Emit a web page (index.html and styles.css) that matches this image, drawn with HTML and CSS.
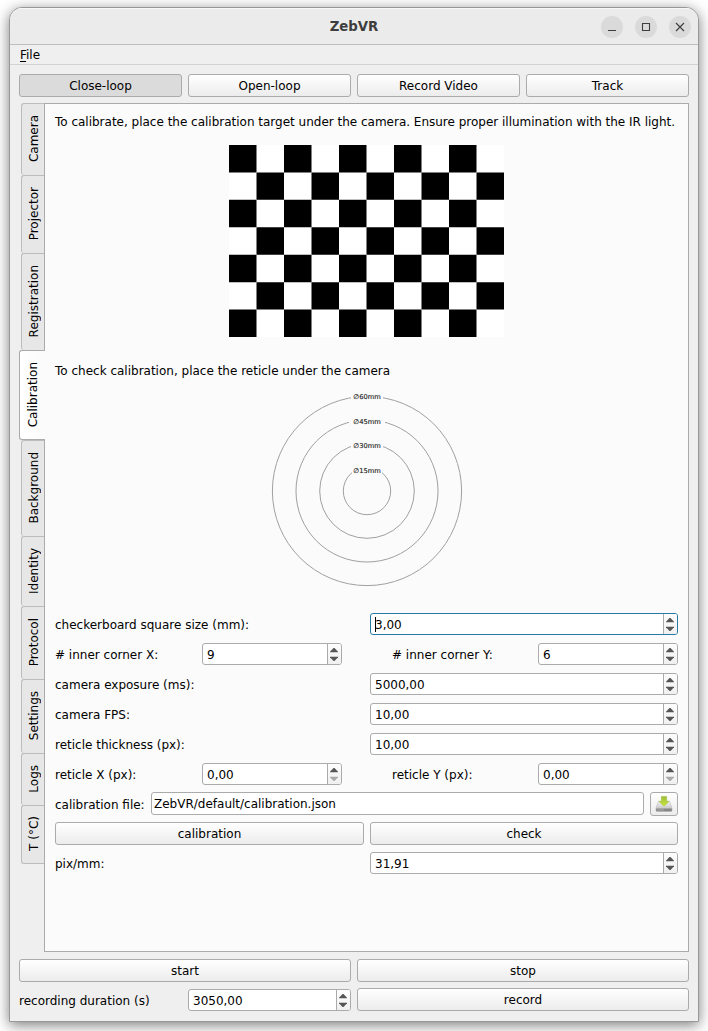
FILE: index.html
```html
<!DOCTYPE html>
<html lang="en">
<head>
<meta charset="utf-8">
<title>ZebVR</title>
<link rel="stylesheet" href="styles.css">
</head>
<body>
<svg width="0" height="0" class="defs">
  <symbol id="arrows" viewBox="0 0 13 20">
    <path class="up" d="M2 8.3V7.7L5.5 4H6.5L10 7.7V8.3Z"/>
    <path class="down" d="M2 12.7V13.3L5.5 17H6.5L10 13.3V12.7Z"/>
  </symbol>
</svg>
<div class="window">
  <header class="titlebar">
    <h1 class="title">ZebVR</h1>
    <div class="controls">
      <span class="control"><svg width="22" height="22"><path d="M7 14.5H15"/></svg></span>
      <span class="control"><svg width="22" height="22"><path d="M7.5 7.5H14.5V14.5H7.5Z"/></svg></span>
      <span class="control"><svg width="22" height="22"><path d="M7 7L15 15M15 7L7 15"/></svg></span>
    </div>
  </header>
  <nav class="menubar"><span><u>F</u>ile</span></nav>
  <div class="modes">
    <button class="btn pressed">Close-loop</button>
    <button class="btn">Open-loop</button>
    <button class="btn">Record Video</button>
    <button class="btn">Track</button>
  </div>
  <main class="workspace">
    <div class="tabs">
      <div class="tab t-camera"><span>Camera</span></div>
      <div class="tab t-projector"><span>Projector</span></div>
      <div class="tab t-registration"><span>Registration</span></div>
      <div class="tab t-calibration active"><span>Calibration</span></div>
      <div class="tab t-background"><span>Background</span></div>
      <div class="tab t-identity"><span>Identity</span></div>
      <div class="tab t-protocol"><span>Protocol</span></div>
      <div class="tab t-settings"><span>Settings</span></div>
      <div class="tab t-logs"><span>Logs</span></div>
      <div class="tab t-temp"><span>T (°C)</span></div>
    </div>
    <section class="pane">
      <p class="hint intro">To calibrate, place the calibration target under the camera. Ensure proper illumination with the IR light.</p>
      <svg class="board" width="275" height="192" viewBox="0 0 275 192">
        <rect width="275" height="192" fill="#fff"/>
        <g stroke="#000" stroke-width="27.43" stroke-dasharray="27.5">
          <path d="M0 13.71H275"/>
          <path d="M27.5 41.14H275"/>
          <path d="M0 68.57H275"/>
          <path d="M27.5 96H275"/>
          <path d="M0 123.43H275"/>
          <path d="M27.5 150.86H275"/>
          <path d="M0 178.29H275"/>
        </g>
      </svg>
      <p class="hint">To check calibration, place the reticle under the camera</p>
      <svg class="reticle" width="192" height="192" viewBox="0 0 192 192">
        <g class="rings">
          <circle cx="96" cy="96" r="94.6"/>
          <circle cx="96" cy="96" r="71"/>
          <circle cx="96" cy="96" r="47.3"/>
          <circle cx="96" cy="96" r="23.7"/>
        </g>
        <g class="gaps">
          <rect x="80" y="-3" width="32" height="10"/>
          <rect x="78" y="21" width="36" height="10"/>
          <rect x="80" y="46" width="32" height="10"/>
          <rect x="81" y="70" width="30" height="8"/>
        </g>
        <g class="diameters">
          <text x="96" y="4">∅60mm</text>
          <text x="96" y="28.7">∅45mm</text>
          <text x="96" y="53.4">∅30mm</text>
          <text x="96" y="78">∅15mm</text>
        </g>
      </svg>
      <div class="form">
        <div class="row"><label>checkerboard square size (mm):</label><div class="spin focus"><span>3,00</span><i><svg><use href="#arrows"/></svg></i></div></div>
        <div class="row pair">
          <label>#&nbsp;inner corner X:</label><div class="spin"><span>9</span><i><svg><use href="#arrows"/></svg></i></div>
          <label class="second">#&nbsp;inner corner Y:</label><div class="spin"><span>6</span><i><svg><use href="#arrows"/></svg></i></div>
        </div>
        <div class="row"><label>camera exposure (ms):</label><div class="spin"><span>5000,00</span><i><svg><use href="#arrows"/></svg></i></div></div>
        <div class="row"><label>camera FPS:</label><div class="spin"><span>10,00</span><i><svg><use href="#arrows"/></svg></i></div></div>
        <div class="row"><label>reticle thickness (px):</label><div class="spin"><span>10,00</span><i><svg><use href="#arrows"/></svg></i></div></div>
        <div class="row pair">
          <label>reticle X (px):</label><div class="spin at-min"><span>0,00</span><i><svg><use href="#arrows"/></svg></i></div>
          <label class="second">reticle Y (px):</label><div class="spin at-min"><span>0,00</span><i><svg><use href="#arrows"/></svg></i></div>
        </div>
        <div class="file">
          <label>calibration file:</label>
          <div class="input">ZebVR/default/calibration.json</div>
          <button class="btn save" aria-label="Save">
            <svg width="18" height="18" viewBox="0 0 18 18">
              <defs>
                <linearGradient id="metal" x1="0" y1="0" x2="0" y2="1"><stop offset="0" stop-color="#f4f4f4"/><stop offset="1" stop-color="#b5b5b5"/></linearGradient>
                <linearGradient id="green" x1="0" y1="0" x2="0" y2="1"><stop offset="0" stop-color="#9dbe35"/><stop offset="1" stop-color="#cbe53e"/></linearGradient>
              </defs>
              <path d="M3.5 6.5H14.5L17 13V15.5Q17 16.5 16 16.5H2Q1 16.5 1 15.5V13Z" fill="url(#metal)" stroke="#b8b8b8" stroke-width=".6"/>
              <path d="M1.2 13.6H16.8V15.5Q16.8 16.3 16 16.3H2Q1.2 16.3 1.2 15.5Z" fill="#868686"/>
              <path d="M2.5 14.9H9" stroke="#b4b4b4" stroke-width=".8"/>
              <path d="M6.3 1.5H11.7V6.3H14.2L9 11.3L3.8 6.3H6.3Z" fill="url(#green)" stroke="#a5bd45" stroke-width=".5"/>
            </svg>
          </button>
        </div>
        <div class="actions">
          <button class="btn">calibration</button>
          <button class="btn">check</button>
        </div>
        <div class="row"><label>pix/mm:</label><div class="spin"><span>31,91</span><i><svg><use href="#arrows"/></svg></i></div></div>
      </div>
    </section>
  </main>
  <footer class="footer">
    <button class="btn">start</button>
    <button class="btn">stop</button>
    <div class="duration"><label>recording duration (s)</label><div class="spin"><span>3050,00</span><i><svg><use href="#arrows"/></svg></i></div></div>
    <button class="btn">record</button>
  </footer>
</div>
</body>
</html>
```
FILE: styles.css
```css
* { box-sizing: border-box; }
html { background: #fff; }
body {
  margin: 0;
  height: 1031px;
  padding: 7px 9px 0;
  overflow: hidden;
  font: 12px/16px "DejaVu Sans", sans-serif;
  color: #000;
}
.defs { position: absolute; }
.window {
  width: 690px;
  height: 1015px;
  display: flex;
  flex-direction: column;
  background: #efefef;
  border: 1px solid #989898;
  border-radius: 13px 13px 0 0;
  box-shadow: 0 3px 14px rgba(0, 0, 0, .52);
  overflow: hidden;
}
.titlebar {
  height: 37px;
  flex: none;
  display: grid;
  grid-template-columns: 1fr auto 1fr;
  align-items: center;
  background: #ebebeb;
  border-bottom: 1px solid #bfbfbf;
  border-top: 1px solid #f8f8f8;
}
.title {
  grid-column: 2;
  margin: 1px 0 0;
  font: bold 13.3px/18px "DejaVu Sans", sans-serif;
  color: #3d3d3d;
}
.controls { display: flex; gap: 12px; justify-self: end; padding-right: 7px; }
.control { width: 22px; height: 22px; border-radius: 50%; background: #dadada; }
.control svg { display: block; fill: none; stroke: #3d3d3d; stroke-width: 1.1; }
.menubar {
  height: 20px;
  flex: none;
  padding: 2px 0 0 10px;
  border-bottom: 1px solid #d3d3d3;
}
.menubar u { text-underline-offset: 2px; }
.modes {
  display: grid;
  grid-template-columns: repeat(4, 1fr);
  gap: 6px;
  padding: 9px 9px 0;
}
.btn {
  height: 23px;
  padding: 0;
  border: 1px solid #ababab;
  border-radius: 3px;
  background: linear-gradient(#fff, #ececec);
  font: inherit;
  color: inherit;
}
.btn.pressed { background: #dbdbdb; }
.workspace { display: flex; height: 849px; margin: 6px 9px 0; flex: none; }
.tabs { width: 25px; flex: none; padding-left: 2px; }
.tab {
  display: flex;
  align-items: center;
  justify-content: center;
  padding: 0 0 2px 2px;
  border: 1px solid #bcbcbc;
  border-right: 0;
  border-bottom-width: 0;
  border-radius: 3px 0 0 3px;
  background: #e7e7e7;
}
.tab span { writing-mode: vertical-rl; transform: rotate(180deg); white-space: nowrap; }
.tab.active {
  position: relative;
  width: 26px;
  margin-left: -2px;
  padding: 0;
  border-color: #ababab;
  border-bottom-width: 1px;
  background: linear-gradient(90deg, #fff, #fbfbfb);
}
.t-camera { height: 72px; }
.t-projector { height: 78px; }
.t-registration { height: 97px; }
.t-calibration { height: 90px; }
.t-background { height: 96px; }
.t-identity { height: 70px; }
.t-protocol { height: 73px; }
.t-settings { height: 74px; }
.t-logs { height: 52px; }
.tab.t-temp { height: 59px; border-bottom-width: 1px; }
.pane {
  flex: 1;
  display: flex;
  flex-direction: column;
  padding: 10px;
  border: 1px solid #ababab;
  background: #fbfbfb;
}
.hint { margin: 0; white-space: nowrap; }
.intro { letter-spacing: -.008px; }
.board { margin: 15px 0 26px 174px; }
.reticle { margin: 16px 0 0 216px; overflow: visible; }
.rings { fill: none; stroke: #a0a0a0; stroke-width: 1; }
.gaps { fill: #fbfbfb; }
.diameters { font-size: 6.7px; text-anchor: middle; fill: #111; stroke: #333; stroke-width: .15; }
.form { display: grid; row-gap: 8px; margin-top: 26px; }
.row { height: 22px; display: grid; grid-template-columns: 315px 308px; align-items: center; }
.row label { padding-top: 2px; }
.row.pair { grid-template-columns: 147px 140px 196px 140px; }
.row .second { padding-left: 50px; }
.spin {
  height: 22px;
  display: flex;
  align-items: center;
  border: 1px solid #ababab;
  border-radius: 3px;
  background: #fff;
  overflow: hidden;
}
.spin span { flex: 1; height: 20px; padding: 1px 0 0 4px; line-height: 20px; }
.spin i { width: 14px; height: 20px; border-left: 1px solid #ababab; background: linear-gradient(#fdfdfd, #f0f0f0); }
.spin svg { display: block; width: 13px; height: 20px; fill: #555; }
.down { fill: var(--down, #555); }
.spin.focus { border-color: #2878a8; }
.spin.focus span { background: linear-gradient(#000, #000) 4px 3px / 1px 15px no-repeat; }
.at-min { --down: #aaa; }
.file { height: 24px; display: flex; align-items: flex-start; margin-top: -1px; }
.file label { width: 96px; padding-top: 5px; }
.input {
  flex: 1;
  height: 23px;
  padding: 3px 2px;
  border: 1px solid #ababab;
  border-radius: 3px;
  background: #fff;
}
.save { width: 28px; height: 24px; margin-left: 6px; display: grid; place-items: center; }
.actions { display: grid; grid-template-columns: 309px 308px; gap: 6px; margin: -2px 0 -1px; }
.footer {
  display: grid;
  grid-template-columns: 1fr 1fr;
  gap: 6px;
  padding: 7px 9px;
}
.duration { display: grid; grid-template-columns: 169px 163px; align-items: end; }
.duration label { padding-bottom: 2px; }
```
